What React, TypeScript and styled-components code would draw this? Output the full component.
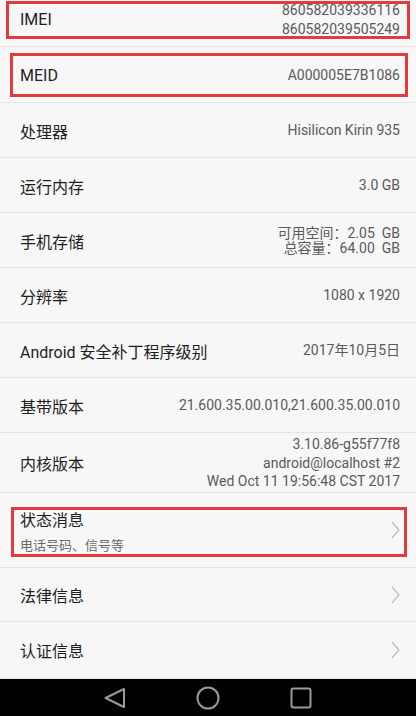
import React from 'react';
import styled, { createGlobalStyle } from 'styled-components';

const Global = createGlobalStyle`
  html, body { margin: 0; padding: 0; background: #f7f7f7; }
  body { font-family: Roboto, "Noto Sans CJK SC", sans-serif; }
`;

const Screen = styled.div`
  width: 416px;
  height: 716px;
  display: flex;
  flex-direction: column;
  background: #f7f7f7;
  overflow: hidden;
`;

const List = styled.div`
  flex: 1;
  display: flex;
  flex-direction: column;
`;

const Row = styled.div<{ $h?: number; $pt?: number; $pb?: number }>`
  position: relative;
  box-sizing: border-box;
  min-height: ${(p) => p.$h ?? 55}px;
  padding: ${(p) => p.$pt ?? 2}px 16px ${(p) => p.$pb ?? 1}px 20px;
  display: flex;
  align-items: center;
  justify-content: space-between;
  gap: 12px;
  border-bottom: 1px solid #e4e4e4;
`;

const Label = styled.div`
  font-size: 16px;
  color: #1e1e1e;
  white-space: nowrap;
`;

const TitleBlock = styled.div`
  display: flex;
  flex-direction: column;
  gap: 4px;
`;

const Sub = styled.div`
  font-size: 13px;
  color: #6a6a6a;
`;

const Values = styled.div<{ $lh?: number }>`
  text-align: right;
  font-size: 14px;
  color: #5a5a5a;
  line-height: ${(p) => p.$lh ?? 19}px;
  white-space: pre;
`;

const Mark = styled.div<{ $t: number; $l: number; $r: number; $b: number }>`
  position: absolute;
  top: ${(p) => p.$t}px;
  left: ${(p) => p.$l}px;
  right: ${(p) => p.$r}px;
  bottom: ${(p) => p.$b}px;
  border: 3px solid #e53a3d;
  pointer-events: none;
`;

const Chevron = styled.svg`
  width: 9px;
  height: 18px;
  flex: none;
`;

const NavBar = styled.div`
  height: 39px;
  flex: none;
  background: #000;
  display: flex;
  justify-content: center;
  align-items: center;
`;

const NavSlot = styled.div`
  width: 93px;
  display: flex;
  justify-content: center;
  align-items: center;
`;

const Arrow = () => (
  <Chevron viewBox="0 0 9 18">
    <polyline points="1,1 8,9 1,17" fill="none" stroke="#bdbdbd" strokeWidth="1.2" />
  </Chevron>
);

type Item = { label: string; value: string; lh?: number; h?: number };

const items: Item[] = [
  { label: '处理器', value: 'Hisilicon Kirin 935' },
  { label: '运行内存', value: '3.0 GB' },
  { label: '手机存储', value: '可用空间：2.05  GB\n总容量：64.00  GB', lh: 14.5 },
  { label: '分辨率', value: '1080 x 1920' },
  { label: 'Android 安全补丁程序级别', value: '2017年10月5日' },
  { label: '基带版本', value: '21.600.35.00.010,21.600.35.00.010' },
  {
    label: '内核版本',
    value: '3.10.86-g55f77f8\nandroid@localhost #2\nWed Oct 11 19:56:48 CST 2017',
    lh: 18.5,
  },
];

export default function App() {
  return (
    <Screen>
      <Global />
      <List>
        <Row $h={47} $pt={0} $pb={7}>
          <Label>IMEI</Label>
          <Values>{'860582039336116\n860582039505249'}</Values>
          <Mark $t={1} $l={6} $r={6} $b={7} />
        </Row>
        <Row $h={56}>
          <Label>MEID</Label>
          <Values>A000005E7B1086</Values>
          <Mark $t={6} $l={10} $r={8} $b={5} />
        </Row>
        {items.map((it) => (
          <Row key={it.label}>
            <Label>{it.label}</Label>
            <Values $lh={it.lh}>{it.value}</Values>
          </Row>
        ))}
        <Row $h={75}>
          <TitleBlock>
            <Label>状态消息</Label>
            <Sub>电话号码、信号等</Sub>
          </TitleBlock>
          <Arrow />
          <Mark $t={14} $l={11} $r={9} $b={10} />
        </Row>
        <Row $h={54}>
          <Label>法律信息</Label>
          <Arrow />
        </Row>
        <Row $h={57}>
          <Label>认证信息</Label>
          <Arrow />
        </Row>
      </List>
      <NavBar>
        <NavSlot>
          <svg width="24" height="24" viewBox="0 0 24 24">
            <polygon points="2.5,12 21,3 21,21" fill="none" stroke="#9a9a9a" strokeWidth="2" strokeLinejoin="round" />
          </svg>
        </NavSlot>
        <NavSlot>
          <svg width="24" height="24" viewBox="0 0 24 24">
            <circle cx="12" cy="12" r="10.5" fill="none" stroke="#9a9a9a" strokeWidth="2" />
          </svg>
        </NavSlot>
        <NavSlot>
          <svg width="24" height="24" viewBox="0 0 24 24">
            <rect x="2.5" y="2.5" width="19" height="19" rx="2" fill="none" stroke="#9a9a9a" strokeWidth="2" />
          </svg>
        </NavSlot>
      </NavBar>
    </Screen>
  );
}
